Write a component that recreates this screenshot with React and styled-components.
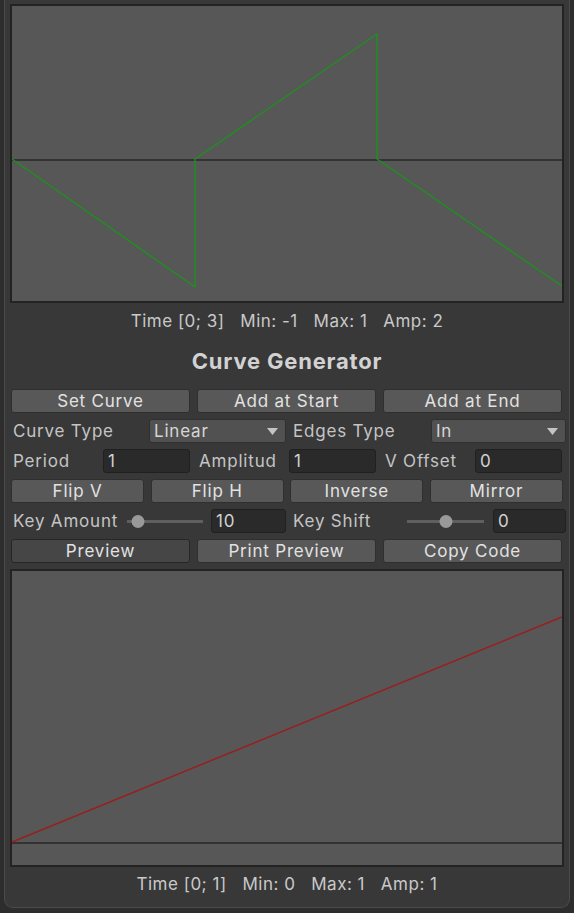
import React from 'react';
import styled, {createGlobalStyle} from 'styled-components';

const GlobalStyle = createGlobalStyle`
    html, body {
        margin: 0;
        padding: 0;
        background: #2d2d2d;
    }
    body {
        font-family: Inter, "Noto Sans", "Liberation Sans", sans-serif;
        -webkit-font-smoothing: antialiased;
    }
`;

const Panel = styled.div`
    box-sizing: border-box;
    margin: 0 4px;
    width: 566px;
    height: 908px;
    padding: 4px 5px 0 5px;
    background: #383838;
    border: 1px solid #4b4b4b;
    border-top: none;
    border-radius: 0 0 9px 9px;
    display: flex;
    flex-direction: column;
`;

const Graph = styled.div`
    box-sizing: border-box;
    height: ${props => props.h}px;
    margin-top: ${props => props.top || 0}px;
    background: #575757;
    border: 2px solid #232323;
    flex-shrink: 0;

    svg {
        display: block;
        width: 100%;
        height: 100%;
    }
`;

const Stats = styled.div`
    margin-top: ${props => props.top}px;
    height: 20px;
    line-height: 20px;
    text-align: center;
    white-space: pre;
    color: #c9c9c9;
    font-size: 17px;
    letter-spacing: 0.5px;
`;

const Title = styled.div`
    margin-top: 18px;
    height: 24px;
    line-height: 24px;
    text-align: center;
    color: #d2d2d2;
    font-size: 22px;
    font-weight: 700;
    letter-spacing: 0.8px;
`;

const Rows = styled.div`
    margin-top: 16px;
    margin-right: -2px;
    padding-left: 1px;
    display: flex;
    flex-direction: column;
    gap: 6px;
`;

const Row = styled.div`
    display: grid;
    grid-template-columns: ${props => props.cols};
    column-gap: ${props => props.gap}px;
    height: 24px;
    padding-right: ${props => props.pr || 0}px;
    align-items: center;
`;

const Half = styled.div`
    display: grid;
    grid-template-columns: ${props => props.cols};
    column-gap: ${props => props.gap || 0}px;
    align-items: center;
    height: 24px;
`;

const Button = styled.div`
    box-sizing: border-box;
    height: 24px;
    line-height: 22px;
    text-align: center;
    border: 1px solid ${props => props.pressed ? '#262626' : '#2f2f2f'};
    border-radius: 3px;
    background: ${props => props.pressed ? '#464646' : '#585858'};
    color: #e2e2e2;
    font-size: 17px;
    letter-spacing: 0.8px;
    white-space: nowrap;
`;

const Label = styled.div`
    padding-left: 2px;
    color: #c4c4c4;
    font-size: 17px;
    letter-spacing: 0.8px;
    white-space: nowrap;
    line-height: 24px;
`;

const Dropdown = styled.div`
    box-sizing: border-box;
    height: 24px;
    display: flex;
    align-items: center;
    justify-content: space-between;
    padding: 0 7px 0 4px;
    background: #515151;
    border: 1px solid #303030;
    border-radius: 3px;
    color: #d6d6d6;
    font-size: 17px;
    letter-spacing: 0.8px;

    svg {
        display: block;
    }
`;

const Field = styled.div`
    box-sizing: border-box;
    height: 24px;
    line-height: 22px;
    padding-left: 4px;
    background: #2a2a2a;
    border: 1px solid #202020;
    border-radius: 3px;
    color: #d2d2d2;
    font-size: 17px;
    letter-spacing: 0.8px;
`;

const SliderTrack = styled.div`
    position: relative;
    height: 24px;

    &::before {
        content: '';
        position: absolute;
        left: 0;
        right: 0;
        top: 11px;
        height: 3px;
        background: #5f5f5f;
    }
`;

const Thumb = styled.div`
    position: absolute;
    top: 6px;
    width: 13px;
    height: 13px;
    border-radius: 50%;
    background: #999999;
    transform: translateX(-50%);
`;

const Arrow = () => (
    <svg width="11" height="7" viewBox="0 0 11 7">
        <path d="M0 0 L11 0 L5.5 7 Z" fill="#c4c4c4"/>
    </svg>
);

const Slider = ({pos}) => (
    <SliderTrack>
        <Thumb style={{left: pos + '%'}}/>
    </SliderTrack>
);

const TopCurve = () => (
    <svg viewBox="0 0 550 295" preserveAspectRatio="none">
        <line x1="0" y1="154" x2="550" y2="154" stroke="#333333" strokeWidth="2"/>
        <polyline points="0,153 183,281 183,153 365,28 365,153 550,280"
                  fill="none" stroke="#1c921c" strokeWidth="1.4" strokeLinejoin="miter"/>
    </svg>
);

const BottomCurve = () => (
    <svg viewBox="0 0 550 294" preserveAspectRatio="none">
        <line x1="0" y1="272" x2="550" y2="272" stroke="#333333" strokeWidth="2"/>
        <line x1="0" y1="271" x2="550" y2="46" stroke="#9c1c1c" strokeWidth="1.4"/>
    </svg>
);

const App = () => {
    return (
        <Panel>
            <GlobalStyle/>
            <Graph h={299}>
                <TopCurve/>
            </Graph>
            <Stats top={8}>{'Time [0; 3]   Min: -1   Max: 1   Amp: 2'}</Stats>
            <Title>Curve Generator</Title>
            <Rows>
                <Row cols="1fr 1fr 1fr" gap={7} pr={4}>
                    <Button>Set Curve</Button>
                    <Button>Add at Start</Button>
                    <Button>Add at End</Button>
                </Row>
                <Row cols="1fr 1fr" gap={5}>
                    <Half cols="138px 1fr">
                        <Label>Curve Type</Label>
                        <Dropdown>Linear<Arrow/></Dropdown>
                    </Half>
                    <Half cols="140px 1fr">
                        <Label>Edges Type</Label>
                        <Dropdown>In<Arrow/></Dropdown>
                    </Half>
                </Row>
                <Row cols="1fr 1fr 1fr" gap={7} pr={4}>
                    <Half cols="92px 1fr">
                        <Label>Period</Label>
                        <Field>1</Field>
                    </Half>
                    <Half cols="92px 1fr">
                        <Label>Amplitud</Label>
                        <Field>1</Field>
                    </Half>
                    <Half cols="92px 1fr">
                        <Label>V Offset</Label>
                        <Field>0</Field>
                    </Half>
                </Row>
                <Row cols="1fr 1fr 1fr 1fr" gap={6.5} pr={3}>
                    <Button>Flip V</Button>
                    <Button>Flip H</Button>
                    <Button>Inverse</Button>
                    <Button>Mirror</Button>
                </Row>
                <Row cols="1fr 1fr" gap={5}>
                    <Half cols="116px 76px 1fr" gap={0}>
                        <Label>Key Amount</Label>
                        <Slider pos={14}/>
                        <Field style={{marginLeft: 8}}>10</Field>
                    </Half>
                    <Half cols="116px 77px 1fr" gap={0}>
                        <Label>Key Shift</Label>
                        <Slider pos={51}/>
                        <Field style={{marginLeft: 9}}>0</Field>
                    </Half>
                </Row>
                <Row cols="1fr 1fr 1fr" gap={7} pr={4}>
                    <Button pressed>Preview</Button>
                    <Button>Print Preview</Button>
                    <Button>Copy Code</Button>
                </Row>
            </Rows>
            <Graph h={298} top={6}>
                <BottomCurve/>
            </Graph>
            <Stats top={7}>{'Time [0; 1]   Min: 0   Max: 1   Amp: 1'}</Stats>
        </Panel>
    );
};

export default App;
